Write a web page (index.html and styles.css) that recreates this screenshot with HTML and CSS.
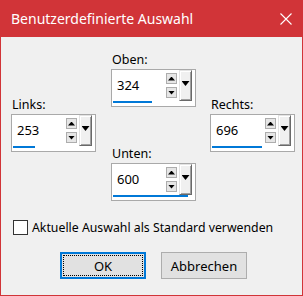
FILE: index.html
```html
<!DOCTYPE html>
<html lang="de">
<head>
<meta charset="utf-8">
<title>Benutzerdefinierte Auswahl</title>
<link rel="stylesheet" href="styles.css">
</head>
<body>
<div class="window">
  <div class="titlebar">
    <span class="title">Benutzerdefinierte Auswahl</span>
    <svg class="close" width="12" height="12" viewBox="0 0 12 12"><path d="M0.5 0.5 L11.5 11.5 M11.5 0.5 L0.5 11.5" stroke="#fff" stroke-width="1.1" fill="none"/></svg>
  </div>
  <div class="content">
    <div class="fields">
      <div class="col col-side">
        <div class="field">
          <div class="label">Links:</div>
          <div class="spin">
            <div class="spin-row">
              <span class="value">253</span>
              <div class="arrows"><span class="arrow up"></span><span class="arrow down"></span></div>
              <span class="drop"></span>
            </div>
            <div class="bar" style="width:22px"></div>
          </div>
        </div>
      </div>
      <div class="col col-mid">
        <div class="field">
          <div class="label">Oben:</div>
          <div class="spin">
            <div class="spin-row">
              <span class="value">324</span>
              <div class="arrows"><span class="arrow up"></span><span class="arrow down"></span></div>
              <span class="drop"></span>
            </div>
            <div class="bar" style="width:39px"></div>
          </div>
        </div>
        <div class="field field-low">
          <div class="label">Unten:</div>
          <div class="spin">
            <div class="spin-row">
              <span class="value">600</span>
              <div class="arrows"><span class="arrow up"></span><span class="arrow down"></span></div>
              <span class="drop"></span>
            </div>
            <div class="bar" style="width:75px"></div>
          </div>
        </div>
      </div>
      <div class="col col-side col-right">
        <div class="field">
          <div class="label">Rechts:</div>
          <div class="spin">
            <div class="spin-row">
              <span class="value">696</span>
              <div class="arrows"><span class="arrow up"></span><span class="arrow down"></span></div>
              <span class="drop"></span>
            </div>
            <div class="bar" style="width:50px"></div>
          </div>
        </div>
      </div>
    </div>
    <label class="check-row"><span class="checkbox"></span><span>Aktuelle Auswahl als Standard verwenden</span></label>
    <div class="buttons">
      <button class="btn btn-default"><span class="focus">OK</span></button>
      <button class="btn">Abbrechen</button>
    </div>
  </div>
</div>
</body>
</html>
```

FILE: styles.css
```css
html, body {
  margin: 0;
  padding: 0;
  background: #f0f0f0;
}
.window {
  width: 303px;
  height: 296px;
  display: flex;
  flex-direction: column;
  font-family: "Noto Sans", "Open Sans", sans-serif;
  font-size: 12.5px;
  color: #000;
}
.titlebar {
  height: 37px;
  flex: none;
  background: #d13438;
  display: flex;
  align-items: center;
  justify-content: space-between;
  padding: 0 11px 0 11px;
  box-sizing: border-box;
}
.title {
  color: #fff;
  font-size: 14px;
  line-height: 18px;
}
.close {
  display: block;
}
.content {
  flex: 1;
  border: 1px solid #d13438;
  border-top: 0;
  background: #f0f0f0;
  display: flex;
  flex-direction: column;
}
.fields {
  display: flex;
  padding-left: 10px;
}
.col {
  width: 85px;
  display: flex;
  flex-direction: column;
}
.col-side {
  margin-top: 60px;
}
.col-mid {
  margin-left: 15px;
  padding-top: 15px;
}
.col-right {
  margin-left: 14px;
}
.field-low {
  margin-top: 39px;
}
.label {
  height: 17px;
  line-height: 16px;
  padding-left: 1px;
}
.spin {
  width: 85px;
  height: 38px;
  box-sizing: border-box;
  border: 1px solid #a9a9a9;
  background: #fff;
  display: flex;
  flex-direction: column;
}
.spin-row {
  height: 31px;
  display: flex;
  padding-right: 3px;
}
.value {
  flex: 1;
  padding-left: 5px;
  padding-top: 7px;
  line-height: 17px;
  font-size: 13px;
}
.arrows {
  width: 11px;
  margin-right: 2px;
  padding-top: 3px;
  display: flex;
  flex-direction: column;
  gap: 3px;
}
.arrow {
  width: 11px;
  height: 11px;
  box-sizing: border-box;
  border: 1px solid #adadad;
  background: #e6e6e6;
  display: flex;
  align-items: center;
  justify-content: center;
}
.arrow::after {
  content: "";
  width: 7px;
  height: 4px;
  background: #000;
}
.arrow.up::after {
  clip-path: polygon(50% 0, 100% 100%, 0 100%);
}
.arrow.down::after {
  clip-path: polygon(0 0, 100% 0, 50% 100%);
}
.drop {
  width: 13px;
  height: 31px;
  box-sizing: border-box;
  background: #f0f0f0;
  border: 1px solid;
  border-color: #e3e3e3 #696969 #696969 #e3e3e3;
  box-shadow: inset 1px 1px #fff, inset -1px -1px #a0a0a0;
  display: flex;
  justify-content: center;
  padding-top: 10px;
}
.drop::after {
  content: "";
  width: 8px;
  height: 5px;
  background: #000;
  clip-path: polygon(0 0, 100% 0, 50% 100%);
}
.bar {
  height: 2px;
  margin-left: 1px;
  background: #0078d7;
}
.check-row {
  display: flex;
  align-items: center;
  margin-top: 19px;
  padding-left: 12px;
  height: 15px;
  font-size: 12.3px;
  line-height: 15px;
}
.checkbox {
  width: 15px;
  height: 15px;
  box-sizing: border-box;
  border: 1px solid #333;
  background: #fff;
  margin-right: 4px;
  flex: none;
}
.buttons {
  display: flex;
  gap: 15px;
  margin-top: 17px;
  padding-left: 59px;
}
.btn {
  width: 86px;
  height: 27px;
  box-sizing: border-box;
  border: 1px solid #adadad;
  background: #e1e1e1;
  font-family: inherit;
  font-size: 13px;
  color: #000;
  padding: 0;
  margin: 0;
  display: flex;
  align-items: center;
  justify-content: center;
}
.btn-default {
  border: 2px solid #0078d7;
  padding: 1px;
}
.focus {
  flex: 1;
  align-self: stretch;
  border: 1px dotted #000;
  display: flex;
  align-items: center;
  justify-content: center;
}
```
